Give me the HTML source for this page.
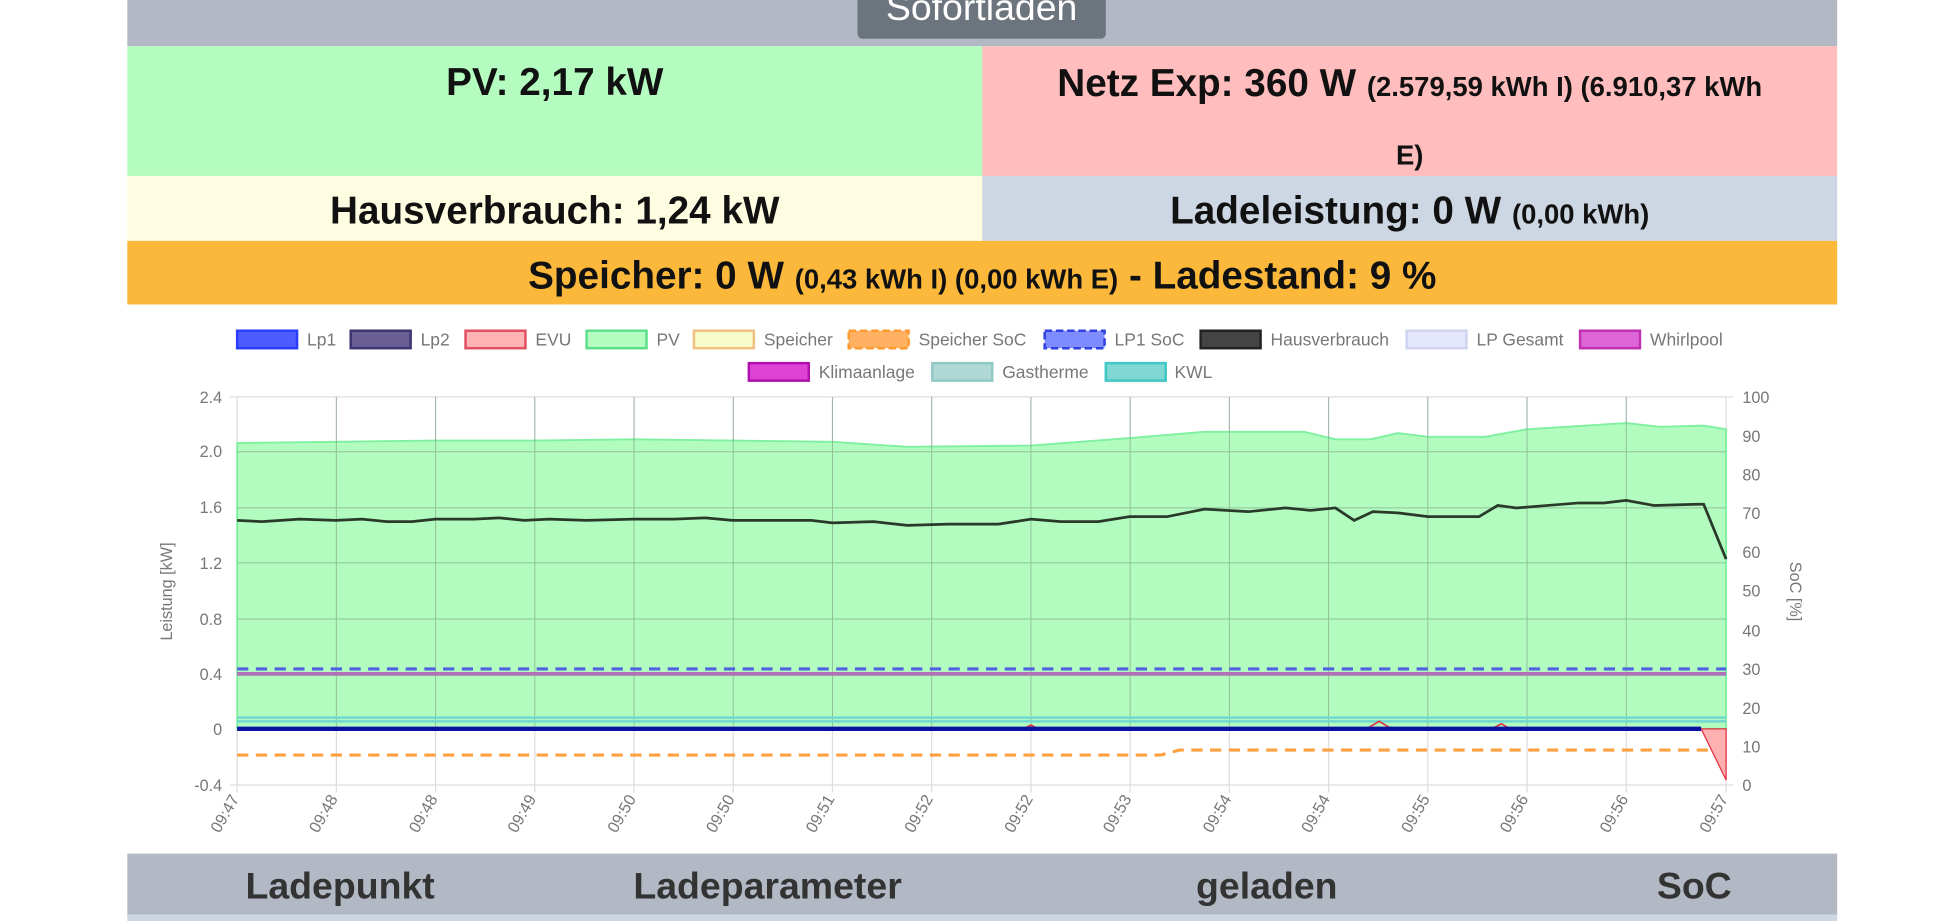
<!DOCTYPE html>
<html><head><meta charset="utf-8"><style>
html,body{margin:0;padding:0;background:#fff;overflow:hidden;width:1957px;height:921px}
#w{width:1568px;height:738px;transform:scale(1.24809,1.248);transform-origin:0 0;position:relative;font-family:"Liberation Sans",sans-serif}
.a{position:absolute;box-sizing:border-box;text-align:center;font-weight:bold;color:#111}
.s{font-size:22px}
</style></head><body><div id="w">
<div class="a" style="left:102px;top:0;width:1370px;height:37px;background:#b3b9c4"></div>
<div class="a" style="left:687px;top:0;width:199px;height:31px;background:#6c757d;border-radius:0 0 4px 4px;overflow:hidden;color:#fff;font-weight:normal;font-size:30px;line-height:14px">Sofortladen</div>
<div class="a" style="left:102px;top:37px;width:685px;height:104px;background:#b5fcc0;font-size:31px;line-height:58px">PV: 2,17 kW</div>
<div class="a" style="left:787px;top:37px;width:685px;height:104px;background:#ffbdbd;font-size:31px;line-height:52px;padding:4px 10px 0">Netz Exp: 360 W <span class="s">(2.579,59 kWh I) (6.910,37 kWh<br>E)</span></div>
<div class="a" style="left:102px;top:141px;width:685px;height:52px;background:#fffde1;font-size:31px;line-height:56px">Hausverbrauch: 1,24 kW</div>
<div class="a" style="left:787px;top:141px;width:685px;height:52px;background:#cdd6e3;font-size:31px;line-height:56px">Ladeleistung: 0 W <span class="s">(0,00 kWh)</span></div>
<div class="a" style="left:102px;top:193px;width:1370px;height:51px;background:#fbb83a;font-size:31px;line-height:56px">Speicher: 0 W <span class="s">(0,43 kWh I) (0,00 kWh E)</span> - Ladestand: 9 %</div>
<svg style="position:absolute;left:0;top:244px" width="1568" height="440" viewBox="0 244 1568 440" font-family="Liberation Sans,sans-serif" font-size="14" fill="#777">
<g stroke-width="2">
<rect x="190" y="265" width="48" height="14" fill="#4d5cff" stroke="#2a3cff"/><text x="246" y="277">Lp1</text>
<rect x="281" y="265" width="48" height="14" fill="#6a5f95" stroke="#3d3470"/><text x="337" y="277">Lp2</text>
<rect x="373" y="265" width="48" height="14" fill="#ffb3b3" stroke="#e05060"/><text x="429" y="277">EVU</text>
<rect x="470" y="265" width="48" height="14" fill="#b5fcc0" stroke="#5de08a"/><text x="526" y="277">PV</text>
<rect x="556" y="265" width="48" height="14" fill="#f8fcc8" stroke="#f0c080"/><text x="612" y="277">Speicher</text>
<rect x="680" y="265" width="48" height="14" fill="#ffb060" stroke="#ff9a30" stroke-dasharray="6 3"/><text x="736" y="277">Speicher SoC</text>
<rect x="837" y="265" width="48" height="14" fill="#7f8cff" stroke="#3040e0" stroke-dasharray="6 3"/><text x="893" y="277">LP1 SoC</text>
<rect x="962" y="265" width="48" height="14" fill="#444" stroke="#222"/><text x="1018" y="277">Hausverbrauch</text>
<rect x="1127" y="265" width="48" height="14" fill="#e4e6fb" stroke="#d0d4f0"/><text x="1183" y="277">LP Gesamt</text>
<rect x="1266" y="265" width="48" height="14" fill="#dd66d6" stroke="#c030b0"/><text x="1322" y="277">Whirlpool</text>
<rect x="600" y="291" width="48" height="14" fill="#dd44d5" stroke="#b010b0"/><text x="656" y="303">Klimaanlage</text>
<rect x="747" y="291" width="48" height="14" fill="#b0d8d5" stroke="#90c8c4"/><text x="803" y="303">Gastherme</text>
<rect x="886" y="291" width="48" height="14" fill="#80d8d5" stroke="#40c8c4"/><text x="941" y="303">KWL</text>
</g>
<g stroke="#ddd" stroke-width="1">
<path d="M190 318H1383M190 370H1383M190 421H1383M190 473H1383M190 525H1383M190 577H1383M190 629H1383"/>
<path d="M190 318V635M269.5 318V635M349 318V635M428.5 318V635M508 318V635M587.5 318V635M667 318V635M746.5 318V635M826 318V635M905.5 318V635M985 318V635M1064.5 318V635M1144 318V635M1223.5 318V635M1303 318V635M1383 318V635"/>
<path d="M184 318H190M184 629H190M1383 318H1389M1383 629H1389"/>
</g>
<path d="M190 355L269 354L349 353L428 353L508 352L587 353L667 354L727 358L826 357L905 351L965 346L1045 346L1070 352L1098 352L1120 347L1144 350L1190 350L1223 344L1303 339L1330 342L1365 341L1383 344V584H190Z" fill="#b3fcc0" stroke="#7ef0a0" stroke-width="1.5"/>
<g stroke="#7a9a80" stroke-width="0.8" opacity=".6"><path d="M190 362H1383M190 407H1383M190 451H1383M190 496H1383M190 540H1383M269.5 318V584M349 318V584M428.5 318V584M508 318V584M587.5 318V584M667 318V584M746.5 318V584M826 318V584M905.5 318V584M985 318V584M1064.5 318V584M1144 318V584M1223.5 318V584M1303 318V584"/></g>
<path d="M190 575H1383M190 578H1383" stroke="#70d8d0" stroke-width="2"/>
<path d="M190 540H1383" stroke="#b070b8" stroke-width="3"/>
<path d="M190 536H1383" stroke="#5060e0" stroke-width="2.5" stroke-dasharray="9 6"/>
<path d="M190 605H930L945 601H1383" stroke="#ffa040" stroke-width="2.5" stroke-dasharray="9 6" fill="none"/>
<path d="M1363 584L1383 625V584Z" fill="#ffb0b0" stroke="#e03040" stroke-width="1"/>
<path d="M820 584L826 581L832 584M1095 584L1105 578L1115 584M1195 584L1203 580L1210 584" stroke="#e03040" fill="none" stroke-width="1.3"/>
<path d="M190 584H1363" stroke="#0a10a0" stroke-width="3.5"/>
<path d="M190 417L210 418L240 416L269 417L290 416L310 418L330 418L349 416L380 416L400 415L420 417L440 416L470 417L508 416L540 416L565 415L587 417L620 417L650 417L667 419L700 418L727 421L760 420L800 420L826 416L850 418L880 418L905 414L935 414L965 408L1000 410L1030 407L1050 409L1070 407L1085 417L1100 410L1120 411L1144 414L1185 414L1200 405L1215 407L1240 405L1265 403L1285 403L1303 401L1325 405L1360 404L1365 404L1383 448" stroke="#2a3a2a" stroke-width="2.2" fill="none"/>
<g font-size="13" text-anchor="end">
<text x="178" y="323">2.4</text><text x="178" y="366">2.0</text><text x="178" y="411">1.6</text><text x="178" y="456">1.2</text><text x="178" y="501">0.8</text><text x="178" y="545">0.4</text><text x="178" y="589">0</text><text x="178" y="634">-0.4</text>
</g>
<g font-size="13">
<text x="1396" y="323">100</text><text x="1396" y="354">90</text><text x="1396" y="385">80</text><text x="1396" y="416">70</text><text x="1396" y="447">60</text><text x="1396" y="478">50</text><text x="1396" y="510">40</text><text x="1396" y="541">30</text><text x="1396" y="572">20</text><text x="1396" y="603">10</text><text x="1396" y="634">0</text>
</g>
<text transform="translate(138,474) rotate(-90)" text-anchor="middle" font-size="13">Leistung [kW]</text>
<text transform="translate(1434,474) rotate(90)" text-anchor="middle" font-size="13">SoC [%]</text>
<g font-size="13" text-anchor="end">
<text transform="translate(192,640) rotate(-60)">09:47</text><text transform="translate(271,640) rotate(-60)">09:48</text><text transform="translate(351,640) rotate(-60)">09:48</text><text transform="translate(430,640) rotate(-60)">09:49</text><text transform="translate(510,640) rotate(-60)">09:50</text><text transform="translate(589,640) rotate(-60)">09:50</text><text transform="translate(669,640) rotate(-60)">09:51</text><text transform="translate(748,640) rotate(-60)">09:52</text><text transform="translate(828,640) rotate(-60)">09:52</text><text transform="translate(907,640) rotate(-60)">09:53</text><text transform="translate(987,640) rotate(-60)">09:54</text><text transform="translate(1066,640) rotate(-60)">09:54</text><text transform="translate(1146,640) rotate(-60)">09:55</text><text transform="translate(1225,640) rotate(-60)">09:56</text><text transform="translate(1305,640) rotate(-60)">09:56</text><text transform="translate(1385,640) rotate(-60)">09:57</text>
</g>
</svg>
<div class="a" style="left:102px;top:684px;width:1370px;height:49px;background:#b3b9c4"></div>
<div class="a" style="left:102px;top:733px;width:1370px;height:5px;background:#cdd6e3"></div>
<div class="a" style="left:150px;top:684px;width:245px;font-size:30px;line-height:54px;color:#333">Ladepunkt</div>
<div class="a" style="left:470px;top:684px;width:290px;font-size:30px;line-height:54px;color:#333">Ladeparameter</div>
<div class="a" style="left:915px;top:684px;width:200px;font-size:30px;line-height:54px;color:#333">geladen</div>
<div class="a" style="left:1300px;top:684px;width:115px;font-size:30px;line-height:54px;color:#333">SoC</div>
</div></body></html>
